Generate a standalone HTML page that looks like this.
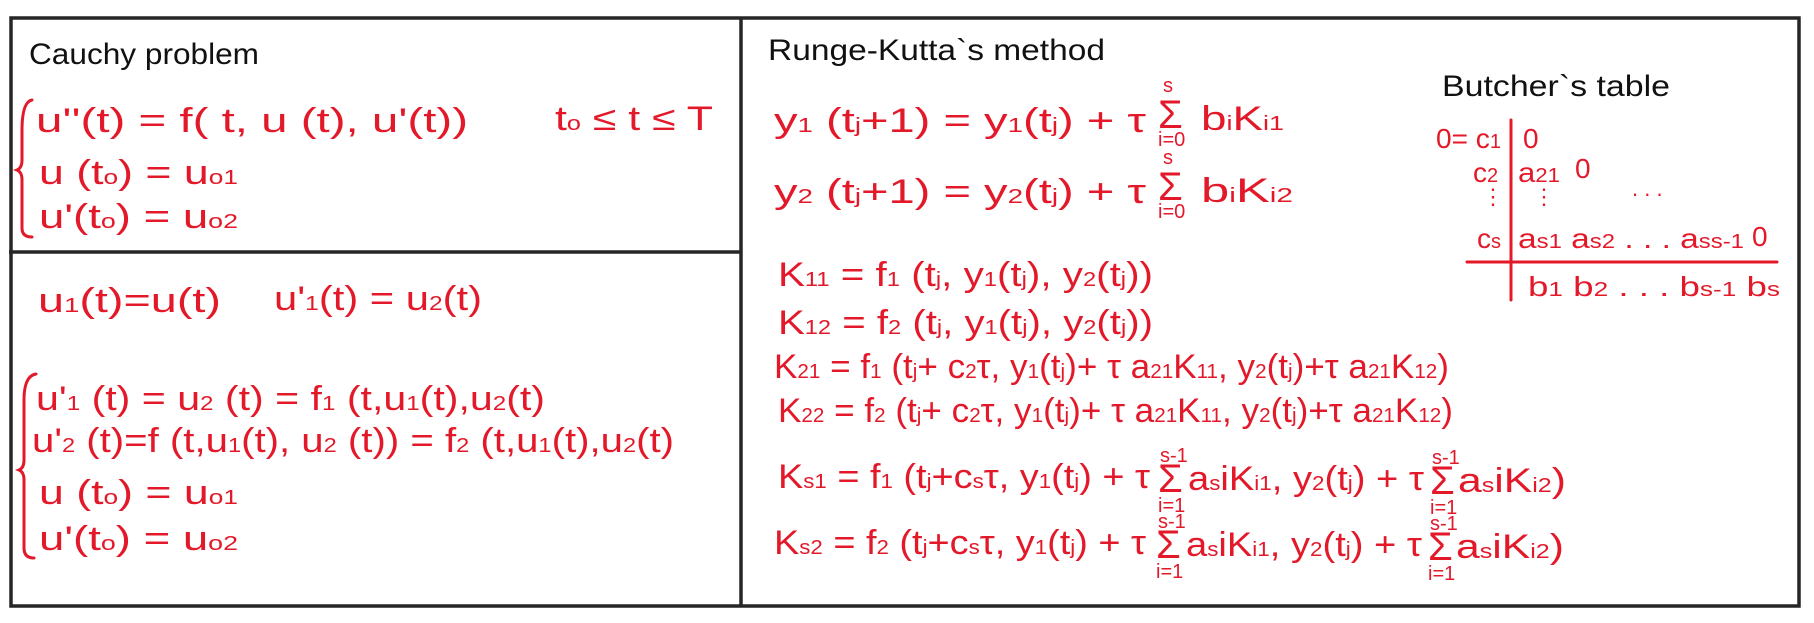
<!DOCTYPE html>
<html><head><meta charset="utf-8"><style>
html,body{margin:0;padding:0;background:#fff;width:1814px;height:623px;overflow:hidden}
svg{display:block}
text{font-family:"Liberation Sans",sans-serif}
.r{fill:#e3192a;font-size:34px}
.s{font-size:20px}
.g{font-size:40px}
.b{fill:#111;font-size:30px}
</style></head><body>
<svg width="1814" height="623" viewBox="0 0 1814 623" xmlns="http://www.w3.org/2000/svg">
<g stroke="#262626" stroke-width="3.5" fill="none">
<rect x="11" y="18" width="1788" height="588"/>
<line x1="741" y1="18" x2="741" y2="606"/>
<line x1="9" y1="252" x2="741" y2="252"/>
</g>
<text class="b" x="29" y="64" textLength="230" lengthAdjust="spacingAndGlyphs">Cauchy problem</text>
<text class="b" x="768" y="60" textLength="337" lengthAdjust="spacingAndGlyphs">Runge-Kutta`s method</text>
<text class="b" x="1442" y="96" textLength="228" lengthAdjust="spacingAndGlyphs">Butcher`s table</text>

<g fill="none" stroke="#e3192a" stroke-width="3" stroke-linecap="round">
<path d="M32 100 Q22 102 22 130 L22 160 Q22 168 17 170 Q22 172 22 180 L22 228 Q22 237 32 237"/>
<path d="M36 374 Q24 376 24 400 L24 460 Q24 468 19 470 Q24 472 24 480 L24 548 Q24 558 34 558"/>
<line x1="1511" y1="120" x2="1511" y2="300"/>
<line x1="1467" y1="262" x2="1777" y2="262"/>
</g>

<g class="r">
<text x="36" y="132" textLength="432" lengthAdjust="spacingAndGlyphs">u''(t) = f( t, u (t), u'(t))</text>
<text x="555" y="130" textLength="158" lengthAdjust="spacingAndGlyphs">t<tspan class="s">o</tspan> ≤ t ≤ T</text>
<text x="39" y="184" textLength="199" lengthAdjust="spacingAndGlyphs">u (t<tspan class="s">o</tspan>) = u<tspan class="s">o1</tspan></text>
<text x="39" y="228" textLength="199" lengthAdjust="spacingAndGlyphs">u'(t<tspan class="s">o</tspan>) = u<tspan class="s">o2</tspan></text>

<text x="38" y="312" textLength="183" lengthAdjust="spacingAndGlyphs">u<tspan class="s">1</tspan>(t)=u(t)</text>
<text x="274" y="310" textLength="208" lengthAdjust="spacingAndGlyphs">u'<tspan class="s">1</tspan>(t) = u<tspan class="s">2</tspan>(t)</text>
<text x="36" y="410" textLength="509" lengthAdjust="spacingAndGlyphs">u'<tspan class="s">1</tspan> (t) = u<tspan class="s">2</tspan> (t) = f<tspan class="s">1</tspan> (t,u<tspan class="s">1</tspan>(t),u<tspan class="s">2</tspan>(t)</text>
<text x="32" y="452" textLength="642" lengthAdjust="spacingAndGlyphs">u'<tspan class="s">2</tspan> (t)=f (t,u<tspan class="s">1</tspan>(t), u<tspan class="s">2</tspan> (t)) = f<tspan class="s">2</tspan> (t,u<tspan class="s">1</tspan>(t),u<tspan class="s">2</tspan>(t)</text>
<text x="39" y="504" textLength="199" lengthAdjust="spacingAndGlyphs">u (t<tspan class="s">o</tspan>) = u<tspan class="s">o1</tspan></text>
<text x="39" y="550" textLength="199" lengthAdjust="spacingAndGlyphs">u'(t<tspan class="s">o</tspan>) = u<tspan class="s">o2</tspan></text>

<text x="774" y="132" textLength="372" lengthAdjust="spacingAndGlyphs">y<tspan class="s">1</tspan> (t<tspan class="s">j</tspan>+1) = y<tspan class="s">1</tspan>(t<tspan class="s">j</tspan>) + τ</text>
<text class="g" x="1158" y="128">Σ</text><text class="s" x="1163" y="92">s</text><text class="s" x="1158" y="146">i=0</text>
<text x="1201" y="130" textLength="83" lengthAdjust="spacingAndGlyphs">b<tspan class="s">i</tspan>K<tspan class="s">i1</tspan></text>
<text x="774" y="203" textLength="372" lengthAdjust="spacingAndGlyphs">y<tspan class="s">2</tspan> (t<tspan class="s">j</tspan>+1) = y<tspan class="s">2</tspan>(t<tspan class="s">j</tspan>) + τ</text>
<text class="g" x="1158" y="200">Σ</text><text class="s" x="1163" y="164">s</text><text class="s" x="1158" y="218">i=0</text>
<text x="1201" y="202" textLength="92" lengthAdjust="spacingAndGlyphs">b<tspan class="s">i</tspan>K<tspan class="s">i2</tspan></text>

<text x="778" y="286" textLength="375" lengthAdjust="spacingAndGlyphs">K<tspan class="s">11</tspan> = f<tspan class="s">1</tspan> (t<tspan class="s">j</tspan>, y<tspan class="s">1</tspan>(t<tspan class="s">j</tspan>), y<tspan class="s">2</tspan>(t<tspan class="s">j</tspan>))</text>
<text x="778" y="334" textLength="375" lengthAdjust="spacingAndGlyphs">K<tspan class="s">12</tspan> = f<tspan class="s">2</tspan> (t<tspan class="s">j</tspan>, y<tspan class="s">1</tspan>(t<tspan class="s">j</tspan>), y<tspan class="s">2</tspan>(t<tspan class="s">j</tspan>))</text>
<text x="774" y="378" textLength="675" lengthAdjust="spacingAndGlyphs">K<tspan class="s">21</tspan> =  f<tspan class="s">1</tspan> (t<tspan class="s">j</tspan>+ c<tspan class="s">2</tspan>τ, y<tspan class="s">1</tspan>(t<tspan class="s">j</tspan>)+ τ a<tspan class="s">21</tspan>K<tspan class="s">11</tspan>, y<tspan class="s">2</tspan>(t<tspan class="s">j</tspan>)+τ a<tspan class="s">21</tspan>K<tspan class="s">12</tspan>)</text>
<text x="778" y="422" textLength="675" lengthAdjust="spacingAndGlyphs">K<tspan class="s">22</tspan> =  f<tspan class="s">2</tspan> (t<tspan class="s">j</tspan>+ c<tspan class="s">2</tspan>τ, y<tspan class="s">1</tspan>(t<tspan class="s">j</tspan>)+ τ a<tspan class="s">21</tspan>K<tspan class="s">11</tspan>, y<tspan class="s">2</tspan>(t<tspan class="s">j</tspan>)+τ a<tspan class="s">21</tspan>K<tspan class="s">12</tspan>)</text>

<text x="778" y="488" textLength="372" lengthAdjust="spacingAndGlyphs">K<tspan class="s">s1</tspan> =  f<tspan class="s">1</tspan> (t<tspan class="s">j</tspan>+c<tspan class="s">s</tspan>τ, y<tspan class="s">1</tspan>(t<tspan class="s">j</tspan>) + τ</text>
<text class="g" x="1158" y="492">Σ</text><text class="s" x="1160" y="462">s-1</text><text class="s" x="1158" y="512">i=1</text>
<text x="1188" y="490" textLength="236" lengthAdjust="spacingAndGlyphs">a<tspan class="s">s</tspan>iK<tspan class="s">i1</tspan>, y<tspan class="s">2</tspan>(t<tspan class="s">j</tspan>) + τ</text>
<text class="g" x="1430" y="494">Σ</text><text class="s" x="1432" y="464">s-1</text><text class="s" x="1430" y="514">i=1</text>
<text x="1458" y="492" textLength="108" lengthAdjust="spacingAndGlyphs">a<tspan class="s">s</tspan>iK<tspan class="s">i2</tspan>)</text>

<text x="774" y="554" textLength="372" lengthAdjust="spacingAndGlyphs">K<tspan class="s">s2</tspan> =  f<tspan class="s">2</tspan> (t<tspan class="s">j</tspan>+c<tspan class="s">s</tspan>τ, y<tspan class="s">1</tspan>(t<tspan class="s">j</tspan>) + τ</text>
<text class="g" x="1156" y="558">Σ</text><text class="s" x="1158" y="528">s-1</text><text class="s" x="1156" y="578">i=1</text>
<text x="1186" y="556" textLength="236" lengthAdjust="spacingAndGlyphs">a<tspan class="s">s</tspan>iK<tspan class="s">i1</tspan>, y<tspan class="s">2</tspan>(t<tspan class="s">j</tspan>) + τ</text>
<text class="g" x="1428" y="560">Σ</text><text class="s" x="1430" y="530">s-1</text><text class="s" x="1428" y="580">i=1</text>
<text x="1456" y="558" textLength="108" lengthAdjust="spacingAndGlyphs">a<tspan class="s">s</tspan>iK<tspan class="s">i2</tspan>)</text>
</g>

<g class="r" style="font-size:28px">
<text x="1436" y="148" textLength="65" lengthAdjust="spacingAndGlyphs">0= c<tspan class="s">1</tspan></text>
<text x="1523" y="148">0</text>
<text x="1473" y="182">c<tspan class="s">2</tspan></text>
<text x="1518" y="182" textLength="42" lengthAdjust="spacingAndGlyphs">a<tspan class="s">21</tspan></text>
<text x="1575" y="178">0</text>
<text x="1632" y="196" font-size="22">. . .</text>
<text x="1482" y="204" font-size="22">⋮</text>
<text x="1533" y="204" font-size="22">⋮</text>
<text x="1477" y="248">c<tspan class="s">s</tspan></text>
<text x="1518" y="248" textLength="226" lengthAdjust="spacingAndGlyphs">a<tspan class="s">s1</tspan> a<tspan class="s">s2</tspan> . . .  a<tspan class="s">ss-1</tspan></text>
<text x="1752" y="246">0</text>
<text x="1528" y="296" textLength="252" lengthAdjust="spacingAndGlyphs">b<tspan class="s">1</tspan>  b<tspan class="s">2</tspan>  . . .  b<tspan class="s">s-1</tspan> b<tspan class="s">s</tspan></text>
</g>
</svg>
</body></html>
